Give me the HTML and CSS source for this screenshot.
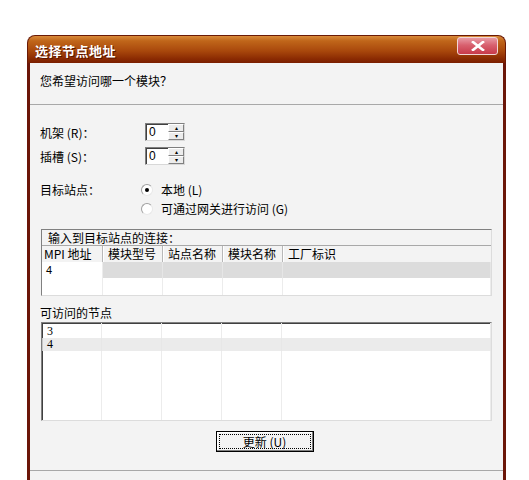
FILE: index.html
```html
<!DOCTYPE html>
<html lang="zh-CN">

<head>
  <meta charset="UTF-8">
  <link rel="stylesheet" href="styles.css">
</head>

<body>
  <div class="node-window">
    <div class="node-titlebar">
      <span class="node-title">选择节点地址</span>
      <div class="node-close-btn">
        <svg width="14" height="10" viewBox="0 0 14 10">
          <path d="M2 1 L12 9 M12 1 L2 9" stroke="#fff" stroke-width="2.6" stroke-linecap="square" />
        </svg>
      </div>
    </div>

    <div class="node-body">
      <div class="node-question">您希望访问哪一个模块？</div>

      <div class="node-form">
        <div class="node-field">
          <span class="node-label">机架 (<u>R</u>)：</span>
          <div class="node-spin">
            <span class="node-spin-value">0</span>
            <div class="node-spin-btns">
              <div class="node-spin-btn">▴</div>
              <div class="node-spin-btn">▾</div>
            </div>
          </div>
        </div>
        <div class="node-field">
          <span class="node-label">插槽 (<u>S</u>)：</span>
          <div class="node-spin">
            <span class="node-spin-value">0</span>
            <div class="node-spin-btns">
              <div class="node-spin-btn">▴</div>
              <div class="node-spin-btn">▾</div>
            </div>
          </div>
        </div>

        <div class="node-target">
          <span class="node-label">目标站点：</span>
          <div class="node-radios">
            <div class="node-radio checked"><span class="node-radio-dot"></span>本地 (<u>L</u>)</div>
            <div class="node-radio"><span class="node-radio-dot"></span>可通过网关进行访问 (<u>G</u>)</div>
          </div>
        </div>
      </div>

      <div class="node-conn">
        <div class="node-conn-caption">输入到目标站点的连接：</div>
        <div class="node-grid node-grid-head">
          <div>MPI 地址</div>
          <div>模块型号</div>
          <div>站点名称</div>
          <div>模块名称</div>
          <div>工厂标识</div>
        </div>
        <div class="node-grid node-grid-row">
          <div class="node-cell-input">4</div>
          <div class="node-cell-off"></div>
          <div class="node-cell-off"></div>
          <div class="node-cell-off"></div>
          <div class="node-cell-off"></div>
        </div>
        <div class="node-grid node-grid-empty">
          <div></div><div></div><div></div><div></div><div></div>
        </div>
      </div>

      <div class="node-list-label">可访问的节点</div>
      <div class="node-list">
        <div class="node-list-cols">
          <div></div><div></div><div></div><div></div><div></div>
        </div>
        <div class="node-list-rows">
          <div class="node-list-row">3</div>
          <div class="node-list-row alt">4</div>
        </div>
      </div>

      <div class="node-actions">
        <button class="node-update-btn"><span>更新 (<u>U</u>)</span></button>
      </div>

      <div class="node-footer"></div>
    </div>
  </div>
</body>

</html>
```

FILE: styles.css
```css
body {
  margin: 0;
  background-color: #fff;
  font-family: "Noto Sans CJK SC", "Liberation Sans", sans-serif;
  font-size: 12px;
  color: #000;
}

.node-window {
  margin: 35px 0 0 27px;
  width: 479px;
}

.node-titlebar {
  height: 28px;
  border-radius: 8px 8px 0 0;
  background: linear-gradient(to bottom, #d98a3a 0%, #c0661a 18%, #a9480c 55%, #8a2a02 85%, #7a1e00 100%);
  border: 1px solid #6a1a06;
  border-bottom: none;
  display: flex;
  align-items: center;
  justify-content: space-between;
  padding: 0 7px 0 7px;
  box-sizing: border-box;
}

.node-title {
  color: #fff;
  font-weight: bold;
  font-size: 13px;
  letter-spacing: 0.5px;
  text-shadow: 1px 1px 0 #5a1400;
  padding-top: 2px;
}

.node-close-btn {
  width: 41px;
  height: 18px;
  margin-top: -7px;
  border: 1px solid #f2d6d6;
  border-radius: 3px;
  background: linear-gradient(to bottom, #e89aa4 0%, #d8606e 45%, #c83a4a 100%);
  display: flex;
  align-items: center;
  justify-content: center;
  box-sizing: border-box;
}

.node-body {
  background-color: #f3f3f3;
  border-left: 3px solid #6b1608;
  border-right: 3px solid #6b1608;
  height: 420px;
  box-sizing: border-box;
  padding: 0 10px;
  display: flex;
  flex-direction: column;
}

.node-question {
  height: 42px;
  line-height: 36px;
  border-bottom: 1px solid #a8a8a8;
  margin: 0 -10px;
  padding: 0 10px;
  box-sizing: border-box;
}

.node-form {
  padding-top: 18px;
}

.node-field {
  display: flex;
  align-items: center;
  height: 18px;
  margin-bottom: 6px;
}

.node-label {
  width: 105px;
}

.node-spin {
  width: 40px;
  height: 18px;
  box-sizing: border-box;
  background: #fff;
  border: 1px solid #7f7f7f;
  border-right-color: #d8d8d8;
  border-bottom-color: #d8d8d8;
  box-shadow: inset 1px 1px 0 #404040;
  display: flex;
  justify-content: space-between;
}

.node-spin-value {
  padding-left: 3px;
  line-height: 16px;
  font-family: "Liberation Sans", sans-serif;
}

.node-spin-btns {
  width: 16px;
  display: flex;
  flex-direction: column;
}

.node-spin-btn {
  flex: 1;
  background: #ececec;
  border: 1px solid #fff;
  border-right-color: #808080;
  border-bottom-color: #808080;
  font-size: 6px;
  line-height: 6px;
  text-align: center;
  color: #000;
}

.node-target {
  display: flex;
  margin-top: 16px;
}

.node-radios {
  display: flex;
  flex-direction: column;
  gap: 2px;
}

.node-radio {
  display: flex;
  align-items: center;
  height: 17px;
}

.node-radio-dot {
  width: 12px;
  height: 12px;
  border-radius: 50%;
  border: 1px solid #a0a0a0;
  border-bottom-color: #e8e8e8;
  border-right-color: #e8e8e8;
  background: #fff;
  margin: 0 8px 0 -4px;
  box-sizing: border-box;
  position: relative;
}

.node-radio.checked .node-radio-dot::after {
  content: "";
  position: absolute;
  left: 3px;
  top: 3px;
  width: 4px;
  height: 4px;
  background: #000;
  border-radius: 50%;
}

.node-conn {
  margin: 12px 1px 0 1px;
  border: 1px solid #808080;
  border-right-color: #dcdcdc;
  border-bottom-color: #dcdcdc;
  background: #fff;
}

.node-conn-caption {
  height: 15px;
  line-height: 15px;
  padding-left: 6px;
  background: #f3f3f3;
  border-bottom: 1px solid #a8a8a8;
}

.node-grid {
  display: grid;
  grid-template-columns: 61px 60px 60px 60px 1fr;
}

.node-grid-head {
  height: 16px;
  line-height: 16px;
  background: #f3f3f3;
}

.node-grid-head div {
  padding-left: 5px;
  border-right: 1px solid #b8b8b8;
  box-shadow: 1px 0 0 #fff;
}

.node-grid-head div:first-child {
  padding-left: 2px;
}

.node-grid-head div:last-child {
  border-right: none;
  box-shadow: none;
}

.node-grid-row {
  height: 16px;
  line-height: 16px;
}

.node-grid-row div,
.node-grid-empty div {
  border-right: 1px solid #ececec;
}

.node-cell-input {
  padding-left: 4px;
  font-family: "Liberation Sans", sans-serif;
  font-size: 11px;
}

.node-cell-off {
  background: #dcdcdc;
  border-right-color: #e6e6e6 !important;
}

.node-grid-empty {
  height: 17px;
}

.node-list-label {
  margin-top: 8px;
  height: 18px;
  line-height: 18px;
}

.node-list {
  margin: 0 1px;
  height: 99px;
  box-sizing: border-box;
  border: 1px solid #808080;
  border-right-color: #dcdcdc;
  border-bottom-color: #dcdcdc;
  box-shadow: inset 1px 1px 0 #404040;
  background: #fff;
  position: relative;
}

.node-list-cols {
  position: absolute;
  inset: 0;
  display: grid;
  grid-template-columns: 60px 60px 60px 60px 1fr;
}

.node-list-cols div {
  border-right: 1px solid #ececec;
}

.node-list-rows {
  position: relative;
  padding-top: 2px;
}

.node-list-row {
  height: 13px;
  line-height: 13px;
  padding-left: 5px;
  font-family: "Liberation Serif", serif;
  font-size: 12px;
}

.node-list-row.alt {
  background: rgba(230, 230, 230, 0.8);
}

.node-actions {
  display: flex;
  justify-content: center;
  padding-top: 10px;
  padding-right: 4px;
}

.node-update-btn {
  width: 98px;
  height: 21px;
  padding: 2px;
  border: 1px solid #000;
  background: #f3f3f3;
  box-shadow: inset -1px -1px 0 #808080, inset 1px 1px 0 #fff;
  font-family: inherit;
  font-size: 12px;
  box-sizing: border-box;
}

.node-update-btn span {
  display: block;
  height: 100%;
  line-height: 14px;
  border: 1px dotted #000;
  box-sizing: border-box;
}

.node-footer {
  margin: 18px -10px 0;
  border-top: 1px solid #a8a8a8;
}

u {
  text-decoration: none;
}
```
